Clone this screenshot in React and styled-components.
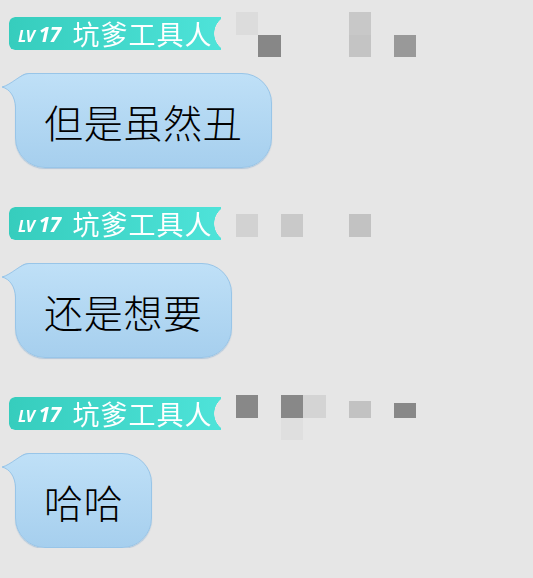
import React from "react";
import styled, { createGlobalStyle } from "styled-components";

const GlobalStyle = createGlobalStyle`
  html, body {
    margin: 0;
    padding: 0;
    background: #e6e6e6;
  }
  body {
    font-family: "Noto Sans CJK SC", "Noto Sans", sans-serif;
  }
`;

const messages = [
  {
    text: "但是虽然丑",
    shift: -5,
    cells: [
      { col: 1, row: 1, color: "#dcdcdc" },
      { col: 2, row: 2, color: "#878787" },
      { col: 6, row: 1, color: "#c8c8c8" },
      { col: 6, row: 2, color: "#c4c4c4" },
      { col: 8, row: 2, color: "#999999" },
    ],
  },
  {
    text: "还是想要",
    shift: 7,
    cells: [
      { col: 1, row: 1, color: "#d2d2d2" },
      { col: 3, row: 1, color: "#c9c9c9" },
      { col: 6, row: 1, color: "#c2c2c2" },
    ],
  },
  {
    text: "哈哈",
    shift: -2,
    cells: [
      { col: 1, row: 1, color: "#888888" },
      { col: 3, row: 1, color: "#888888" },
      { col: 4, row: 1, color: "#d4d4d4" },
      { col: 3, row: 2, color: "#dfdfdf" },
      { col: 6, row: 1, color: "#c2c2c2", top: 6 },
      { col: 8, row: 1, color: "#888888", top: 8 },
    ],
  },
];

export default function App() {
  return (
    <>
      <GlobalStyle />
      <Chat>
        {messages.map((m, i) => (
          <Message key={i}>
            <Header>
              <Badge>
                <Level>
                  <small>LV</small>17
                </Level>
                <Name>坑爹工具人</Name>
              </Badge>
              <Mosaic $shift={m.shift}>
                {m.cells.map((c, k) => (
                  <Cell
                    key={k}
                    $col={c.col}
                    $row={c.row}
                    $color={c.color}
                    $top={c.top || 0}
                  />
                ))}
              </Mosaic>
            </Header>
            <Bubble>
              <Tail width="44" height="46" viewBox="0 0 44 46">
                <defs>
                  <linearGradient
                    id={"bg" + i}
                    gradientUnits="userSpaceOnUse"
                    x1="0"
                    y1="0"
                    x2="0"
                    y2="96"
                  >
                    <stop offset="0" stopColor="#bfe0f7" />
                    <stop offset="1" stopColor="#a6cfee" />
                  </linearGradient>
                </defs>
                <path
                  d="M44 0.5 L28 0.5 C20 0.5 10 12 1 14 C9 16 14 24 14.5 34 L14.5 46 L44 46 Z"
                  fill={"url(#bg" + i + ")"}
                />
                <path
                  d="M44 0.5 L28 0.5 C20 0.5 10 12 1 14 C9 16 14 24 14.5 34 L14.5 46"
                  fill="none"
                  stroke="#98c5e8"
                  strokeWidth="1"
                />
              </Tail>
              {m.text}
            </Bubble>
          </Message>
        ))}
      </Chat>
    </>
  );
}

const Chat = styled.div`
  display: flex;
  flex-direction: column;
  gap: 39px;
  padding-top: 17px;
`;

const Message = styled.div`
  display: flex;
  flex-direction: column;
  align-items: flex-start;
  gap: 23px;
`;

const Header = styled.div`
  display: flex;
  align-items: flex-start;
  height: 33px;
  margin-left: 9px;
`;

const Badge = styled.div`
  display: flex;
  align-items: center;
  height: 33px;
  box-sizing: border-box;
  padding: 0 8px 0 9px;
  border-radius: 6px 0 0 6px;
  background: linear-gradient(90deg, #36cdbd 0%, #42d8cb 50%, #4ee3d9 100%);
  color: #ffffff;
  -webkit-mask: radial-gradient(
    circle at calc(100% + 12px) 50%,
    transparent 18.5px,
    #000 19px
  );
  mask: radial-gradient(
    circle at calc(100% + 12px) 50%,
    transparent 18.5px,
    #000 19px
  );
`;

const Level = styled.span`
  font-family: "Noto Sans", "DejaVu Sans", sans-serif;
  font-weight: 700;
  font-style: italic;
  font-size: 21px;
  letter-spacing: -0.5px;
  margin-right: 12px;
  small {
    font-size: 16px;
    margin-right: 4px;
  }
`;

const Name = styled.span`
  font-family: "Noto Sans CJK SC", sans-serif;
  font-weight: 400;
  font-size: 27px;
  line-height: 33px;
  letter-spacing: 1px;
`;

const Mosaic = styled.div`
  display: grid;
  grid-template-columns: repeat(8, 22.6px);
  grid-template-rows: repeat(2, 22.6px);
  margin-left: 15px;
  margin-top: ${(p) => p.$shift}px;
`;

const Cell = styled.div`
  grid-column: ${(p) => p.$col};
  grid-row: ${(p) => p.$row};
  background: ${(p) => p.$color};
  margin-top: ${(p) => p.$top}px;
`;

const Bubble = styled.div`
  position: relative;
  margin-left: 15px;
  padding: 24px 28px 23px 28px;
  border: 1px solid #98c5e8;
  border-radius: 14px 30px 30px 30px;
  background: linear-gradient(180deg, #bfe0f7 0%, #a6cfee 100%);
  box-shadow: 0 1px 1px rgba(110, 160, 205, 0.45);
  font-family: "Noto Sans CJK SC", sans-serif;
  font-weight: 300;
  font-size: 39px;
  line-height: 46px;
  letter-spacing: 0.7px;
  color: #000000;
  white-space: nowrap;
`;

const Tail = styled.svg`
  position: absolute;
  left: -15px;
  top: -1px;
  display: block;
`;
